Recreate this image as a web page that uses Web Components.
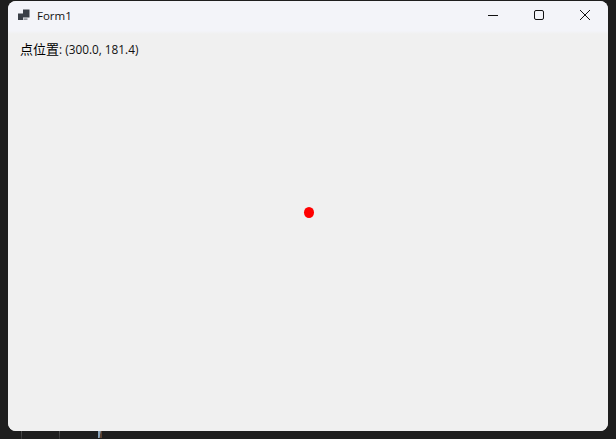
<!DOCTYPE html>
<html lang="zh">
<head>
<meta charset="utf-8">
<title>Form1</title>
<style>
    html, body { margin: 0; height: 100%; }
    body {
        background: #1e1e1e;
        overflow: hidden;
        font-family: "Segoe UI", "Open Sans", "Noto Sans", "Noto Sans CJK SC", sans-serif;
    }
</style>
</head>
<body>
<editor-backdrop>
    <form-window caption="Form1">
        <point-canvas x="300.0" y="181.4"></point-canvas>
    </form-window>
</editor-backdrop>

<script>
class EditorBackdrop extends HTMLElement {
    constructor() {
        super();
        this.attachShadow({ mode: 'open' });
        this.shadowRoot.innerHTML = `
            <style>
                :host {
                    display: flex;
                    flex-direction: column;
                    width: 616px;
                    height: 439px;
                    padding: 1px 8px 0;
                    box-sizing: border-box;
                }
                .guides {
                    display: flex;
                    height: 8px;
                    padding-left: 13px;
                }
                .guide {
                    width: 1px;
                    height: 8px;
                    background: linear-gradient(#505050, #343434);
                }
                .guide + .guide { margin-left: 37px; }
                .brace {
                    margin-left: 38px;
                    width: 4px;
                    height: 7px;
                    background: linear-gradient(100deg, #8aa4ba 45%, #5a4030 60%);
                }
            </style>
            <slot></slot>
            <div class="guides">
                <span class="guide"></span>
                <span class="guide"></span>
                <span class="brace"></span>
            </div>
        `;
    }
}
customElements.define('editor-backdrop', EditorBackdrop);

class FormWindow extends HTMLElement {
    constructor() {
        super();
        this.attachShadow({ mode: 'open' });
        this.shadowRoot.innerHTML = `
            <style>
                :host {
                    display: flex;
                    flex-direction: column;
                    width: 600px;
                    height: 430px;
                    border-radius: 8px;
                    overflow: hidden;
                    background: #f0f0f0;
                    color: #111;
                }
                .bar {
                    display: flex;
                    align-items: center;
                    height: 30px;
                    box-sizing: border-box;
                    padding: 0 0 1px 10px;
                    flex: none;
                    background: #f3f4f9;
                }
                .icon { width: 12px; height: 12px; flex: none; margin-top: -2px; }
                .caption {
                    margin-left: 7px;
                    font-size: 11.5px;
                    flex: 1;
                }
                .buttons { display: flex; height: 100%; }
                .btn {
                    width: 46px;
                    display: flex;
                    align-items: center;
                    justify-content: center;
                }
                .btn svg { width: 12px; height: 12px; margin-top: -1px; }
                .body { flex: 1; display: flex; }
            </style>
            <div class="bar">
                <svg class="icon" viewBox="0 0 12 12" fill="#3a3f47">
                    <rect x="0" y="4.5" width="5" height="6.5"/>
                    <rect x="5" y="0.5" width="6.5" height="8"/>
                    <rect x="5.5" y="9.5" width="4" height="1.2" fill="#6f737a"/>
                </svg>
                <span class="caption"></span>
                <div class="buttons">
                    <span class="btn"><svg viewBox="0 0 12 12" fill="none" stroke="#111" stroke-width="1"><path d="M1 6.5h10"/></svg></span>
                    <span class="btn"><svg viewBox="0 0 12 12" fill="none" stroke="#111" stroke-width="1"><rect x="1.5" y="1.5" width="9" height="9" rx="1.5"/></svg></span>
                    <span class="btn"><svg viewBox="0 0 12 12" fill="none" stroke="#111" stroke-width="1"><path d="M1 1l10 10M11 1L1 11"/></svg></span>
                </div>
            </div>
            <div class="body"><slot></slot></div>
        `;
    }

    connectedCallback() {
        this.shadowRoot.querySelector('.caption').textContent = this.getAttribute('caption');
    }
}
customElements.define('form-window', FormWindow);

class PointCanvas extends HTMLElement {
    constructor() {
        super();
        this.attachShadow({ mode: 'open' });
        this.shadowRoot.innerHTML = `
            <style>
                :host {
                    display: block;
                    flex: 1;
                    position: relative;
                    background: linear-gradient(#f3f4f8, #f0f0f0 3px);
                }
                .label {
                    padding: 10px 0 0 12px;
                    font-size: 11.8px;
                    line-height: 16px;
                    white-space: nowrap;
                    color: #111;
                }
                .cjk { font-size: 13px; color: #000; }
                .dot {
                    position: absolute;
                    width: 10px;
                    height: 11px;
                    border-radius: 50%;
                    background: #ff0000;
                }
            </style>
            <div class="label"><span class="cjk">点位置</span>: <span class="coords"></span></div>
            <div class="dot"></div>
        `;
    }

    connectedCallback() {
        const x = this.getAttribute('x');
        const y = this.getAttribute('y');
        this.shadowRoot.querySelector('.coords').textContent = `(${x}, ${y})`;
        // the point is drawn at its own coordinates on the form
        const dot = this.shadowRoot.querySelector('.dot');
        dot.style.left = `${Math.round(parseFloat(x)) - 4}px`;
        dot.style.top = `${Math.round(parseFloat(y)) - 5}px`;
    }
}
customElements.define('point-canvas', PointCanvas);
</script>
</body>
</html>
